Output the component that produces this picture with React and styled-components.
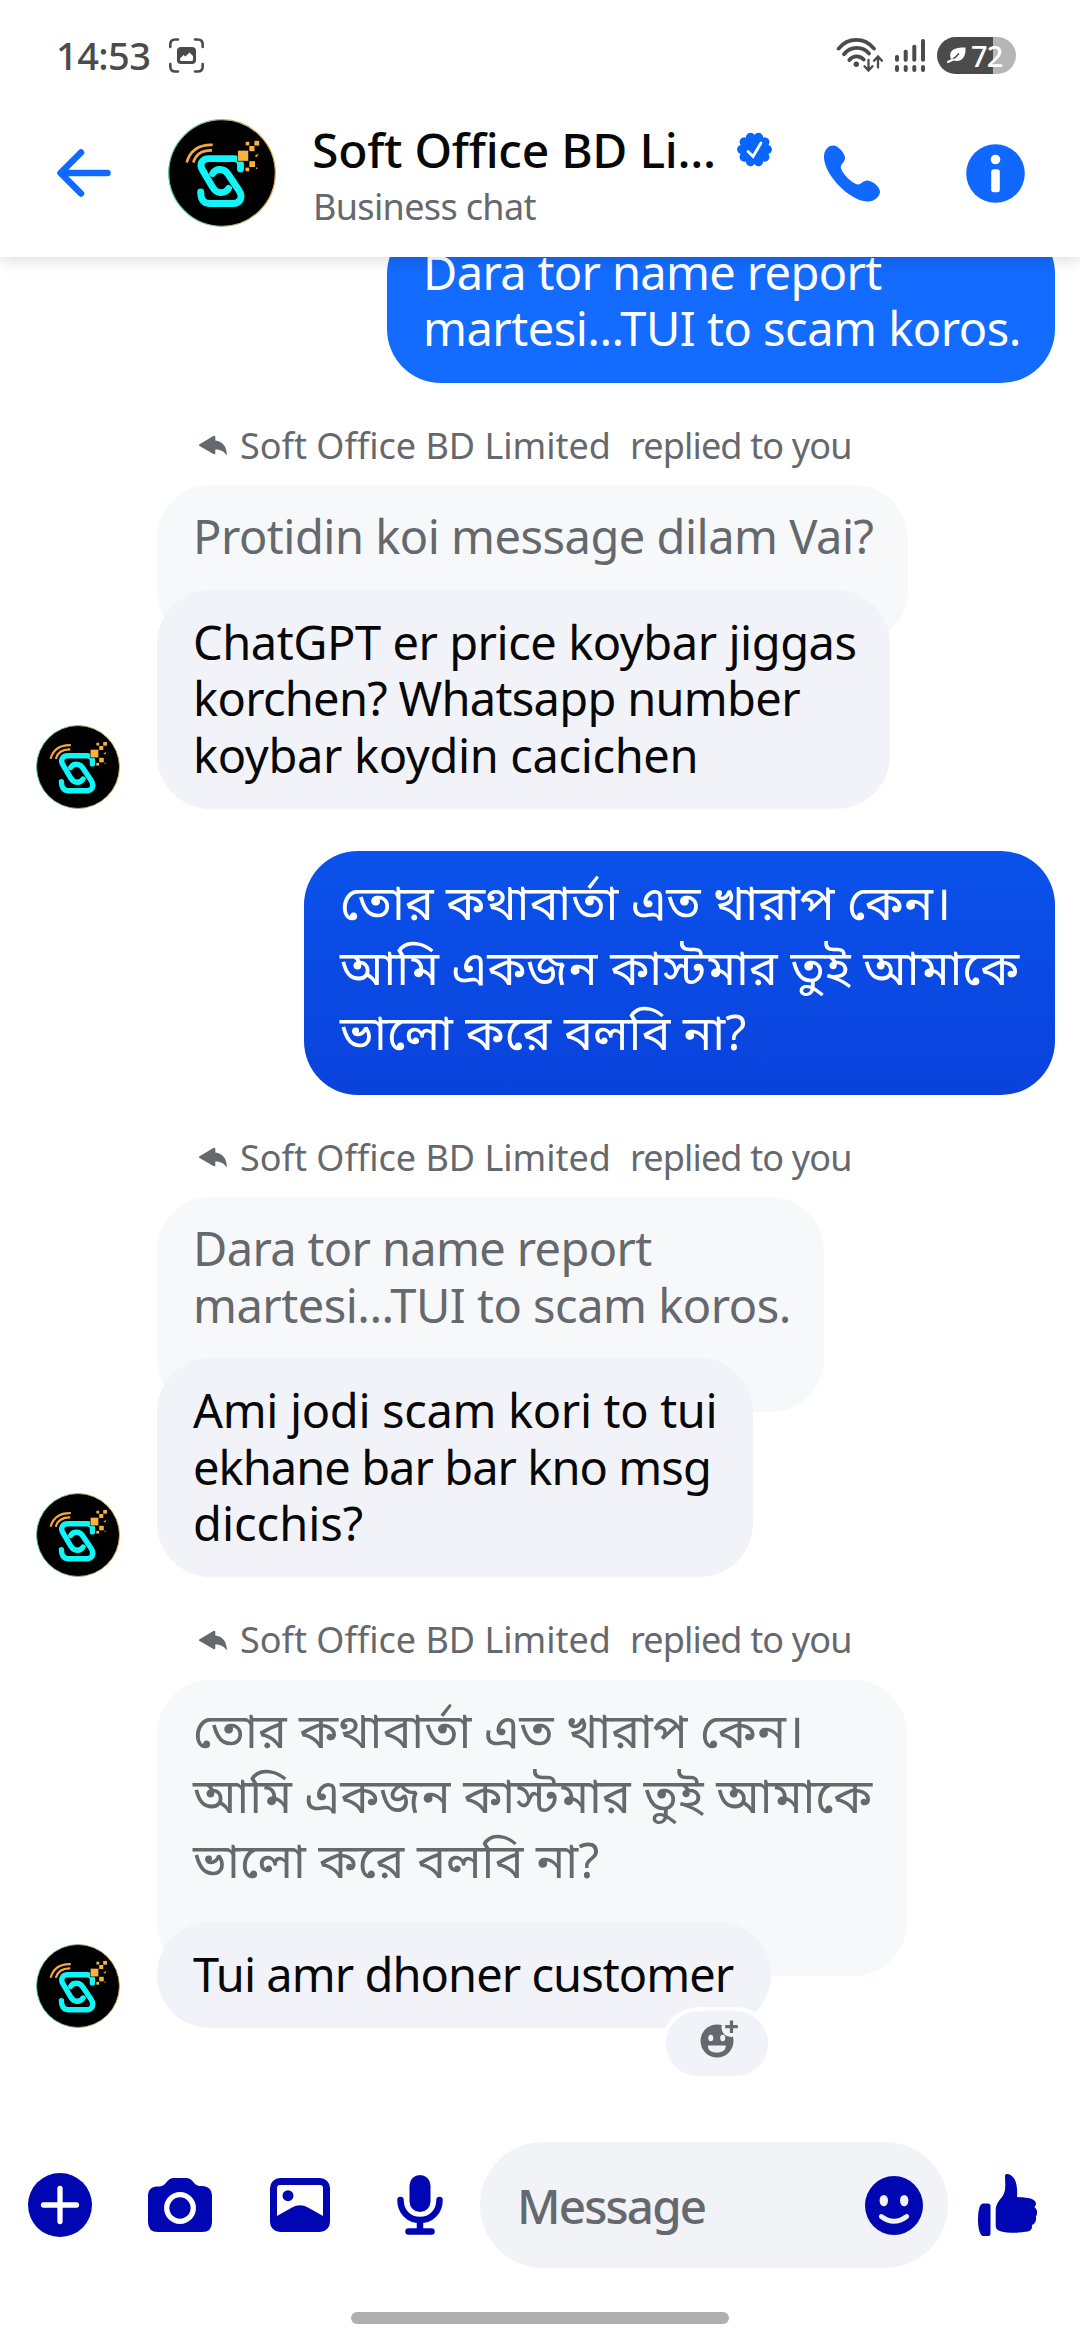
import styled, { createGlobalStyle } from 'styled-components'

const GlobalStyle = createGlobalStyle`
  * { box-sizing: border-box; }
  body {
    margin: 0;
    background: #fff;
    font-family: 'Noto Sans', 'Noto Sans Bengali', sans-serif;
  }
  svg { display: block; flex-shrink: 0; }
`

const Screen = styled.div`
  width: 1080px;
  height: 2340px;
  display: flex;
  flex-direction: column;
  background: #fff;
  overflow: hidden;
`

const TopArea = styled.div`
  height: 257px;
  flex-shrink: 0;
  position: relative;
  z-index: 1;
  background: #fff;
  box-shadow: 0 2px 16px rgba(0, 0, 0, 0.16);
`

const StatusBar = styled.div`
  height: 110px;
  padding: 0 64px 0 56px;
  display: flex;
  align-items: center;
`

const Clock = styled.div`
  width: 113px;
  font-size: 38px;
  font-weight: 500;
  letter-spacing: -0.6px;
  line-height: 50px;
  color: #4b4b4b;
`

const StatusIcons = styled.div`
  margin-left: auto;
  display: flex;
  align-items: center;
  gap: 12px;
`

const Battery = styled.div`
  width: 79px;
  height: 37px;
  border-radius: 19px;
  padding-left: 10px;
  display: flex;
  align-items: center;
  gap: 4px;
  background: linear-gradient(90deg, #4b4b4b 56px, #b6b6b6 56px);
  color: #fff;
  font-size: 29px;
  font-weight: 500;
  line-height: 37px;
  letter-spacing: -0.8px;
`

const Header = styled.div`
  height: 126px;
  padding: 0 55px 0 57px;
  display: flex;
  align-items: center;
`

const HeaderAvatar = styled.div`
  margin: 0 36px 0 57px;
`

const Titles = styled.div`
  width: 512px;
  padding-top: 5px;
`

const TitleRow = styled.div`
  display: flex;
  align-items: center;
  gap: 22px;
`

const Title = styled.div`
  width: 403px;
  font-size: 48px;
  font-weight: 500;
  line-height: 60px;
  letter-spacing: -0.25px;
  color: #080809;
  white-space: nowrap;
`

const Subtitle = styled.div`
  margin: 2px 0 0 1px;
  font-size: 36px;
  line-height: 50px;
  letter-spacing: -0.65px;
  color: #65686c;
  white-space: nowrap;
`

const Actions = styled.div`
  flex: 1;
  display: flex;
  align-items: center;
  justify-content: space-between;
`

const Chat = styled.div`
  flex: 1;
  min-height: 0;
  padding: 0 25px 0 36px;
  display: flex;
  flex-direction: column;
`

const Bubble = styled.div`
  width: ${(p) => p.$width}px;
  flex-shrink: 0;
  padding: 24px 36px 26px;
  border-radius: 54px;
  background: #f2f3f8;
  color: #080809;
  font-size: 47px;
  line-height: 56.4px;
  white-space: nowrap;
`

const OwnBubble = styled(Bubble)`
  align-self: flex-end;
  margin-top: ${(p) => p.$top}px;
  background: ${(p) => p.$fill};
  color: #fff;
`

const QuotedBubble = styled(Bubble)`
  margin-bottom: -54px;
  padding: 23px 36px 79px;
  background: #f7f8fa;
  color: #65686c;
`

const ReplyBubble = styled(Bubble)`
  position: relative;
`

const Line = styled.div`
  letter-spacing: ${(p) => p.$track || 0}px;
`

const Bengali = styled.div`
  margin: -6px 0 5px;
  font-size: 48.6px;
  line-height: 65px;
`

const ReplyLabel = styled.div`
  height: 50px;
  margin: 38px 0 14.5px 162px;
  display: flex;
  align-items: center;
  gap: 12px;
  flex-shrink: 0;
  font-size: 36px;
  line-height: 50px;
  color: #65686c;
  white-space: nowrap;
`

const RepliedTo = styled.span`
  margin-left: 7px;
  letter-spacing: -0.85px;
`

const Incoming = styled.div`
  display: flex;
  align-items: flex-end;
  gap: 37px;
  flex-shrink: 0;
`

const ReactionButton = styled.div`
  position: absolute;
  right: -1px;
  bottom: -52px;
  width: 110px;
  height: 73px;
  border: 4px solid #fff;
  border-radius: 37px;
  background: #f2f3f8;
  display: flex;
  justify-content: center;
  padding: 8px 0 0 4px;
`

const Composer = styled.div`
  height: 126px;
  flex-shrink: 0;
  padding: 0 43px 0 28px;
  display: flex;
  align-items: center;
`

const Tools = styled.div`
  width: 452px;
  display: flex;
  align-items: center;
`

const ToolSlot = styled.div`
  width: ${(p) => p.$width}px;
`

const MessageField = styled.div`
  width: 468px;
  height: 126px;
  margin-right: 30px;
  padding: 0 25px 0 37px;
  border-radius: 63px;
  background: #f2f3f7;
  display: flex;
  align-items: center;
  justify-content: space-between;
  font-size: 47.5px;
  font-weight: 500;
  letter-spacing: -1.8px;
  color: #65686c;
`

const NavArea = styled.div`
  height: 72px;
  flex-shrink: 0;
  padding-top: 44px;
`

const HomeBar = styled.div`
  width: 378px;
  height: 12px;
  margin: 0 auto;
  border-radius: 6px;
  background: #afafaf;
`

const BLUE = '#1068ff'
const NAVY = '#0006b1'
const GREY = '#4b4b4b'

const Logo = ({ size }) => (
  <svg width={size} height={size} viewBox="0 0 108 108">
    <defs>
      <linearGradient id={`ring${size}`} x1="0" x2="1">
        <stop offset="0" stopColor="#4fc9b4" />
        <stop offset="1" stopColor="#e0a84e" />
      </linearGradient>
    </defs>
    <circle cx="54" cy="54" r="53.3" fill="#000" stroke={`url(#ring${size})`} strokeWidth="1.2" />
    <g fill="none" stroke="#f5a93c" strokeWidth="2.7">
      <path d="M18.7 43.5C22 32 31 25.5 44.7 25.9" />
      <path d="M25.3 43.5C27.5 36 33 31 44 31.3" />
    </g>
    <g fill="none" stroke="#0ff5f8" strokeWidth="6.9" strokeLinecap="round" strokeLinejoin="round">
      <path d="M72.5 50V45Q72 39.6 66 39.6H41C34 39.6 31 45 34.5 51L44.5 68C49 75.5 57 75 60.5 69.5" />
      <path d="M44.7 54.5C48 49 56 49 60 55L71 71.5C75.5 78.5 72 84.5 65 84.5H41C35.5 84.5 32.7 80 32.7 73" />
    </g>
    <g fill="#f9b23f">
      <rect x="69.7" y="31.2" width="11" height="11" stroke="#000" strokeWidth=".7" />
      <rect x="81.3" y="27" width="5.2" height="5.2" />
      <rect x="86.4" y="21.8" width="4.8" height="4.8" />
      <rect x="77.7" y="22.8" width="3.6" height="3.6" />
      <rect x="81.3" y="42.2" width="5.8" height="5.8" />
      <rect x="77.5" y="48.6" width="3.7" height="3.7" />
      <path d="M90.5 34.5L89 38L86.5 37Z" />
      <rect x="88" y="48.5" width="1.4" height="1.4" />
    </g>
  </svg>
)

const ScreenshotIcon = () => (
  <svg width="35" height="35" viewBox="0 0 35 35">
    <g fill="none" stroke={GREY} strokeWidth="2.6" strokeLinecap="round">
      <path d="M1.3 9V6.5Q1.3 1.5 6.3 1.5H9M26 1.5H28.7Q33.7 1.5 33.7 6.5V9M33.7 26V28.5Q33.7 33.5 28.7 33.5H26M9 33.5H6.3Q1.3 33.5 1.3 28.5V26" />
    </g>
    <rect x="8" y="9" width="19" height="17" rx="4" fill={GREY} />
    <path d="M11 20.5L14.5 17L16.5 18.5L20.5 14.5L24 18V21.5Q24 23 22.5 23H12.5Q11 23 11 21.5Z" fill="#fff" />
  </svg>
)

const WifiIcon = () => (
  <svg width="47" height="36" viewBox="0 0 47 36" fill="none" stroke={GREY} strokeLinecap="round">
    <g strokeWidth="3.8">
      <path d="M2.6 11.6C12 0 28.5 0 38 11.6" />
      <path d="M8 17.2C14.5 9 26.5 9 33 16.5" />
      <path d="M13.3 23C17 18.2 24 18.2 27.7 22.5" />
    </g>
    <circle cx="20.3" cy="27.2" r="2.7" fill={GREY} stroke="none" />
    <path d="M32.5 23V33M28.5 29.3L32.5 33.5L36.5 29.3M42 30.5V20M38 23.7L42 19.5L46 23.7" strokeWidth="2.3" />
  </svg>
)

const bars = [
  { x: 0, y: 16 },
  { x: 8.7, y: 10.7 },
  { x: 17.3, y: 5.7 },
  { x: 26, y: 0 },
]

const SignalIcon = () => (
  <svg width="30" height="33" viewBox="0 0 30 33" fill={GREY}>
    {bars.map(({ x, y }) => (
      <g key={x}>
        <rect x={x} y={y} width="4" height={22.7 - y} rx="1.8" />
        <rect x={x} y="26" width="4" height="7" rx="2" />
      </g>
    ))}
  </svg>
)

const LeafIcon = () => (
  <svg width="20" height="16" viewBox="0 0 20 16">
    <path d="M3.5 11C1.8 3 7 .5 18.5 .5C19 10 15 15.5 6.5 13.5Z" fill="#fff" />
    <path d="M.8 15C5 12.5 8 12 12 6.5" stroke={GREY} strokeWidth="1.4" fill="none" />
    <path d="M1 15L6 12.5" stroke="#fff" strokeWidth="2" strokeLinecap="round" />
  </svg>
)

const BackIcon = () => (
  <svg width="54" height="48" viewBox="0 0 54 48">
    <path
      d="M24 3.5L3.5 24L24 44.5M4 24H50.5"
      fill="none"
      stroke={BLUE}
      strokeWidth="6.5"
      strokeLinecap="round"
      strokeLinejoin="round"
    />
  </svg>
)

const lobes = [18, 54, 90, 126, 162, 198, 234, 270, 306, 342]

const VerifiedIcon = () => (
  <svg width="35" height="35" viewBox="-17.5 -17.5 35 35">
    <g fill="#0866ff">
      <circle r="14.5" />
      {lobes.map((deg) => (
        <circle key={deg} r="4.6" cy="-12.8" transform={`rotate(${deg})`} />
      ))}
    </g>
    <path d="M-6.5 2L-1.5 7L6.5 -6.5" fill="none" stroke="#fff" strokeWidth="2.8" strokeLinecap="round" />
  </svg>
)

const PhoneIcon = () => (
  <svg width="56" height="57" viewBox="0 0 56 57">
    <path
      d="M0 12C0 5 4 .5 9.5 .5C14 .5 21 8 21 13C21 17 17 18.5 16.8 22C17.5 28 28 38.5 34 39.5C37 39.5 39 35.5 43 35.5C47.5 35.5 56 41 56 47C55.5 52 50 57 43 56.5C26 56 0 30 0 12Z"
      fill={BLUE}
    />
  </svg>
)

const InfoIcon = () => (
  <svg width="59" height="59" viewBox="0 0 59 59">
    <circle cx="29.5" cy="29.5" r="29.3" fill={BLUE} />
    <circle cx="29.5" cy="15.5" r="4.8" fill="#fff" />
    <rect x="25.2" y="25.3" width="8.6" height="23" rx="2.5" fill="#fff" />
  </svg>
)

const ReplyIcon = () => (
  <svg width="30" height="21" viewBox="0 0 30 21">
    <path
      d="M1.5 9.3L15 1.2Q17.3 0 17.3 2V5.5C25 6.5 29 12 28.8 20.5C25.5 15.8 22 14.5 17.3 14.5V18Q17.3 20 15 18.7L1.5 11Q.3 10.2 1.5 9.3Z"
      fill="#65686c"
    />
  </svg>
)

const ReactionIcon = () => (
  <svg width="39" height="40" viewBox="0 0 39 40">
    <circle cx="17" cy="22" r="16.5" fill="#65686c" />
    <circle cx="31" cy="8.5" r="9.5" fill="#f2f3f8" />
    <path d="M31.5 1.5V14M25.2 7.7H37.8" stroke="#65686c" strokeWidth="3.2" />
    <ellipse cx="10.8" cy="19" rx="2.5" ry="3.3" fill="#f2f3f8" />
    <ellipse cx="22.7" cy="19" rx="2.5" ry="3.3" fill="#f2f3f8" />
    <path d="M8 26.5H25.7C26 31 22.5 33.5 16.8 33.5C11 33.5 7.5 31 8 26.5Z" fill="#f2f3f8" />
  </svg>
)

const PlusIcon = () => (
  <svg width="64" height="64" viewBox="0 0 64 64">
    <circle cx="32" cy="32" r="32" fill={NAVY} />
    <path d="M32 15.5V48.5M15.5 32H48.5" stroke="#fff" strokeWidth="5.3" strokeLinecap="round" />
  </svg>
)

const CameraIcon = () => (
  <svg width="64" height="54" viewBox="0 0 64 54">
    <path
      d="M10 8.5C20 8.5 17 0 27 0H37C47 0 44 8.5 54 8C60 8 64 11.5 64 18V44Q64 54 54 54H10Q0 54 0 44V18C0 11.5 4 8 10 8.5Z"
      fill={NAVY}
    />
    <circle cx="32" cy="30" r="13.3" fill="none" stroke="#fff" strokeWidth="5.3" />
  </svg>
)

const GalleryIcon = () => (
  <svg width="60" height="54" viewBox="0 0 60 54">
    <rect width="60" height="54" rx="10" fill={NAVY} />
    <path d="M7 10Q7 7 10 7H50Q53 7 53 10V38L38 29.5Q30 25 22 29.5L7 38Z" fill="#fff" />
    <circle cx="18" cy="17.7" r="5.5" fill={NAVY} />
  </svg>
)

const MicIcon = () => (
  <svg width="46" height="60" viewBox="0 0 46 60">
    <rect x="12.5" y="0" width="21" height="37" rx="10.5" fill={NAVY} />
    <path
      d="M3.5 25C3.5 37 12 45 23 45C34 45 42.5 37 42.5 25M23 45V56M11.5 56.5H34.5"
      fill="none"
      stroke={NAVY}
      strokeWidth="6.5"
      strokeLinecap="round"
    />
  </svg>
)

const SmileIcon = () => (
  <svg width="58" height="59" viewBox="0 0 58 59">
    <ellipse cx="29" cy="29.5" rx="29" ry="29.5" fill={NAVY} />
    <ellipse cx="18.8" cy="24.6" rx="4.2" ry="5.7" fill="#f2f3f7" />
    <ellipse cx="39.2" cy="24.6" rx="4.2" ry="5.7" fill="#f2f3f7" />
    <path d="M16.3 40.5Q29 50 41.7 40.5" fill="none" stroke="#f2f3f7" strokeWidth="4.8" strokeLinecap="round" />
  </svg>
)

const LikeIcon = () => (
  <svg width="59" height="62" viewBox="0 0 59 62">
    <path d="M4.5 29.5H10Q12.5 29.5 12.5 32V59.5Q12.5 62 10 62H4.5C1 60 0 52 0 45.5C0 39 1 30.5 4.5 29.5Z" fill={NAVY} />
    <path
      d="M27 2C27 0 28.5 0 30 0C36.5 1.5 40 9 39 23C47 23.3 54.5 24 57.3 27.5C58.5 29.7 58 31.5 56.5 33C59.5 35.5 60 40 57.8 42.5C58.7 46 57.5 49.5 54 51C54.5 54.5 53 57 49.5 57.5C40 59.3 30 59.2 22.5 57.2C19 56.2 17.7 54.5 17.7 51V37C17.7 29 22 26 25 21.5C28.5 15.5 27 9 27 2Z"
      fill={NAVY}
    />
  </svg>
)

const BengaliText = () => (
  <Bengali>
    <Line $track={-0.1}>তোর কথাবার্তা এত খারাপ কেন।</Line>
    <Line>আমি একজন কাস্টমার তুই আমাকে</Line>
    <Line>ভালো করে বলবি না?</Line>
  </Bengali>
)

const ReportText = () => (
  <>
    <Line $track={-0.65}>Dara tor name report</Line>
    <Line $track={-0.5}>martesi...TUI to scam koros.</Line>
  </>
)

const RepliedThread = ({ quote, quoteWidth, width, reaction, children }) => (
  <>
    <ReplyLabel>
      <ReplyIcon />
      <span>Soft Office BD Limited</span>
      <RepliedTo>replied to you</RepliedTo>
    </ReplyLabel>
    <Incoming>
      <Logo size={84} />
      <div>
        <QuotedBubble $width={quoteWidth}>{quote}</QuotedBubble>
        <ReplyBubble $width={width}>
          {children}
          {reaction && (
            <ReactionButton>
              <ReactionIcon />
            </ReactionButton>
          )}
        </ReplyBubble>
      </div>
    </Incoming>
  </>
)

const App = () => (
  <Screen>
    <GlobalStyle />
    <TopArea>
      <StatusBar>
        <Clock>14:53</Clock>
        <ScreenshotIcon />
        <StatusIcons>
          <WifiIcon />
          <SignalIcon />
          <Battery>
            <LeafIcon />
            72
          </Battery>
        </StatusIcons>
      </StatusBar>
      <Header>
        <BackIcon />
        <HeaderAvatar>
          <Logo size={108} />
        </HeaderAvatar>
        <Titles>
          <TitleRow>
            <Title>Soft Office BD Li...</Title>
            <VerifiedIcon />
          </TitleRow>
          <Subtitle>Business chat</Subtitle>
        </Titles>
        <Actions>
          <PhoneIcon />
          <InfoIcon />
        </Actions>
      </Header>
    </TopArea>

    <Chat>
      <OwnBubble $width={668} $top={-37} $fill="#146bff">
        <ReportText />
      </OwnBubble>

      <RepliedThread
        quote={<Line $track={-0.5}>Protidin koi message dilam Vai?</Line>}
        quoteWidth={751}
        width={733}
      >
        <Line $track={-0.46}>ChatGPT er price koybar jiggas</Line>
        <Line $track={-0.7}>korchen? Whatsapp number</Line>
        <Line $track={-0.36}>koybar koydin cacichen</Line>
      </RepliedThread>

      <OwnBubble $width={751} $top={42} $fill="linear-gradient(#0a52eb, #0a42dc)">
        <BengaliText />
      </OwnBubble>

      <RepliedThread quote={<ReportText />} quoteWidth={667} width={596}>
        <Line $track={-0.34}>Ami jodi scam kori to tui</Line>
        <Line $track={-0.95}>ekhane bar bar kno msg</Line>
        <Line>dicchis?</Line>
      </RepliedThread>

      <RepliedThread quote={<BengaliText />} quoteWidth={750} width={614} reaction>
        <Line $track={-0.95}>Tui amr dhoner customer</Line>
      </RepliedThread>
    </Chat>

    <Composer>
      <Tools>
        <ToolSlot $width={120}>
          <PlusIcon />
        </ToolSlot>
        <ToolSlot $width={122}>
          <CameraIcon />
        </ToolSlot>
        <ToolSlot $width={127}>
          <GalleryIcon />
        </ToolSlot>
        <MicIcon />
      </Tools>
      <MessageField>
        Message
        <SmileIcon />
      </MessageField>
      <LikeIcon />
    </Composer>
    <NavArea>
      <HomeBar />
    </NavArea>
  </Screen>
)

export default App
